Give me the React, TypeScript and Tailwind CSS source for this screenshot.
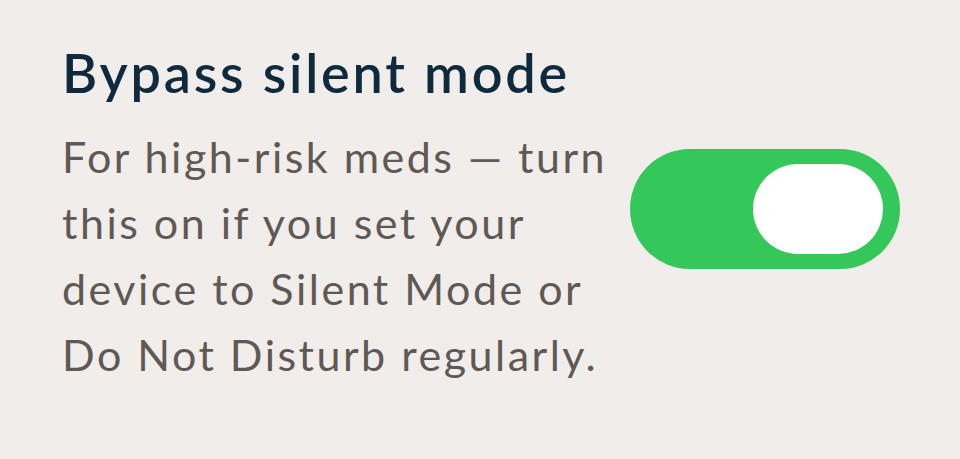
import { FC, useState } from 'react';

const Toggle: FC<{ on: boolean; onChange: (v: boolean) => void }> = ({ on, onChange }) => {
  return (
    <button
      type="button"
      role="switch"
      aria-checked={on}
      onClick={() => onChange(!on)}
      className={`flex h-[120px] w-[270px] shrink-0 items-center rounded-full px-[17px] ${
        on ? 'justify-end bg-[#34c759]' : 'justify-start bg-[#d9d4d0]'
      }`}
    >
      <span className="block h-[90px] w-[130px] rounded-full bg-white" />
    </button>
  );
};

const App: FC = () => {
  const [bypass, setBypass] = useState(true);

  return (
    <div className="flex h-[459px] w-[960px] bg-[#f1edea] pl-[62px] pt-[40px] font-['Lato',sans-serif]">
      <div className="w-[568px] shrink-0">
        <h2 className="text-[54px] font-semibold leading-[66px] tracking-[2.8px] text-[#0f2a3d]">
          Bypass silent mode
        </h2>
        <p className="mt-[18px] text-[43px] leading-[66px] tracking-[2.5px] text-[#5f5955]">
          For high-risk meds — turn
          <br />
          this on if you set your
          <br />
          device to Silent Mode or
          <br />
          Do Not Disturb regularly.
        </p>
      </div>
      <div className="pt-[109px]">
        <Toggle on={bypass} onChange={setBypass} />
      </div>
    </div>
  );
};

export default App;
